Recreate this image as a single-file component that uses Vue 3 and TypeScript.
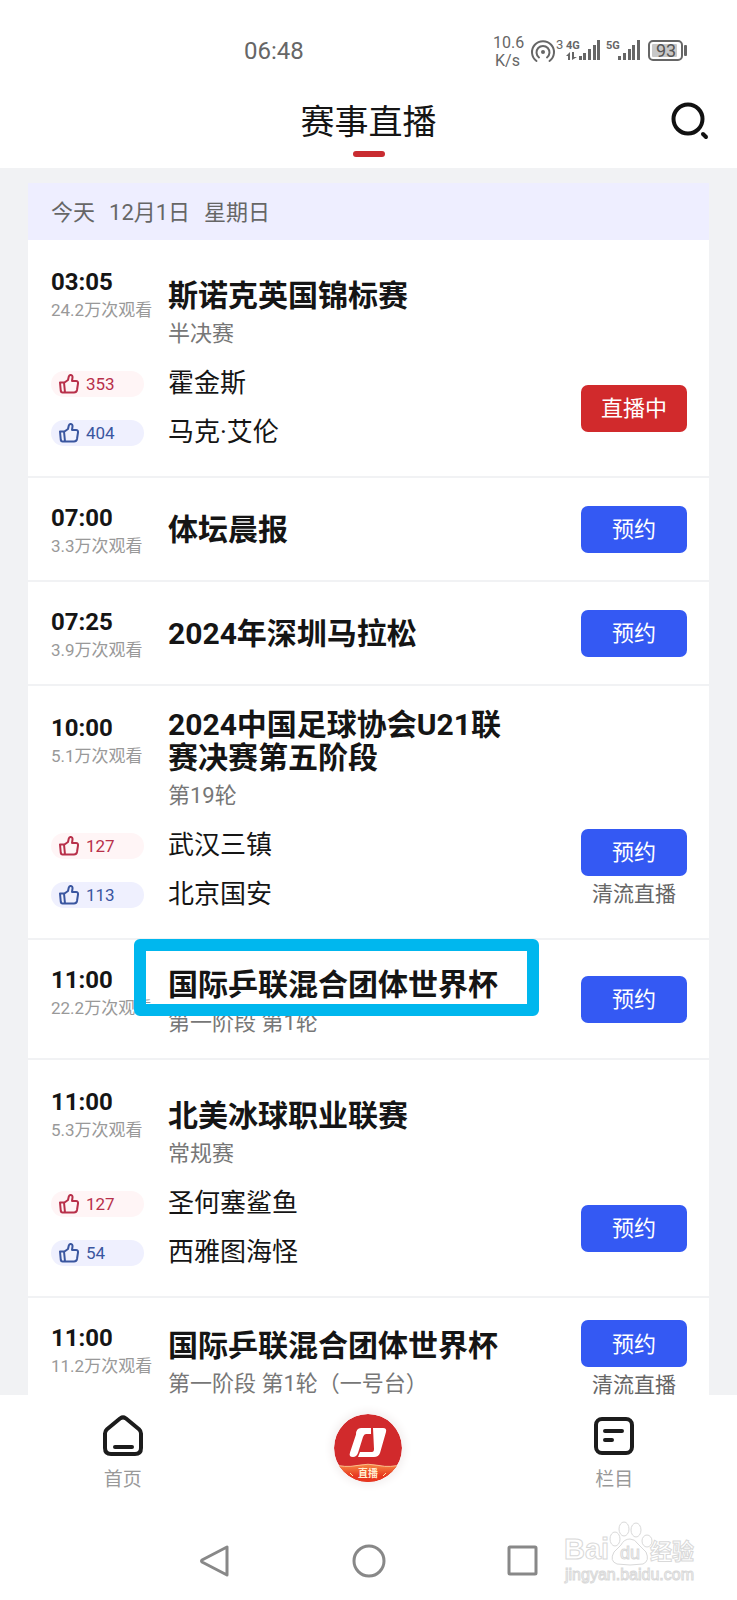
<script setup lang="ts">
interface Side {
  name: string
  votes: number
}

interface LiveEvent {
  id: number
  time: string
  views: string
  title: string
  round?: string
  sides?: Side[]
  live?: boolean
  clean?: boolean
  long?: boolean
  marked?: boolean
}

const events: LiveEvent[] = [
  {
    id: 1,
    time: '03:05',
    views: '24.2万次观看',
    title: '斯诺克英国锦标赛',
    round: '半决赛',
    live: true,
    sides: [
      { name: '霍金斯', votes: 353 },
      { name: '马克·艾伦', votes: 404 },
    ],
  },
  { id: 2, time: '07:00', views: '3.3万次观看', title: '体坛晨报' },
  { id: 3, time: '07:25', views: '3.9万次观看', title: '2024年深圳马拉松' },
  {
    id: 4,
    time: '10:00',
    views: '5.1万次观看',
    title: '2024中国足球协会U21联赛决赛第五阶段',
    round: '第19轮',
    clean: true,
    long: true,
    sides: [
      { name: '武汉三镇', votes: 127 },
      { name: '北京国安', votes: 113 },
    ],
  },
  {
    id: 5,
    time: '11:00',
    views: '22.2万次观看',
    title: '国际乒联混合团体世界杯',
    round: '第一阶段 第1轮',
    marked: true,
  },
  {
    id: 6,
    time: '11:00',
    views: '5.3万次观看',
    title: '北美冰球职业联赛',
    round: '常规赛',
    sides: [
      { name: '圣何塞鲨鱼', votes: 127 },
      { name: '西雅图海怪', votes: 54 },
    ],
  },
  {
    id: 7,
    time: '11:00',
    views: '11.2万次观看',
    title: '国际乒联混合团体世界杯',
    round: '第一阶段 第1轮（一号台）',
    clean: true,
  },
]

function kind(e: LiveEvent): string[] {
  const names: string[] = []
  if (e.sides) names.push('match')
  else if (e.round) names.push('stage')
  if (e.long) names.push('long')
  if (e.clean) names.push('clean')
  return names
}
</script>

<template>
  <div class="screen">
    <div class="status">
      <span class="clock">06:48</span>
      <svg class="signals" viewBox="0 0 204 44" aria-hidden="true">
        <g fill="#666">
          <text x="5" y="19" font-size="16">10.6</text>
          <text x="7" y="37" font-size="16">K/s</text>
          <text x="68" y="20" font-size="13">3</text>
          <text x="78" y="20" font-size="11" font-weight="700">4G</text>
          <text x="118" y="20" font-size="11" font-weight="700">5G</text>
          <circle cx="55" cy="23" r="2" />
          <path d="M78 27l4-4v8h-2v-4zM84 23v8l5-3h-3v-5z" />
          <path d="M91 27h3v4h-3zM95 24h3v7h-3zM100 20h3v11h-3zM105 16h3v15h-3zM109 11h3v20h-3z" />
          <path d="M130 27h3v4h-3zM135 24h3v7h-3zM140 20h3v11h-3zM144 16h3v15h-3zM149 11h3v20h-3z" />
          <rect x="196" y="16" width="3" height="11" rx="1" />
        </g>
        <g fill="none" stroke="#666" stroke-width="2" stroke-linecap="round">
          <path d="M48.500 32a11 11 0 1 1 13 0" />
          <path d="M51 28.500a6.500 6.500 0 1 1 8 0" />
          <rect x="161" y="12" width="33" height="19" rx="4" />
        </g>
        <rect x="164" y="15" width="25" height="13" rx="1" fill="#c8c8c8" />
        <text x="168" y="28" font-size="18" fill="#555">93</text>
      </svg>
    </div>

    <header class="bar">
      <h1>赛事直播</h1>
      <button class="search" type="button" aria-label="搜索">
        <svg viewBox="0 0 40 40">
          <circle cx="18" cy="18" r="14.500" />
          <path d="M33 33l3 3" />
        </svg>
      </button>
    </header>

    <main class="feed">
      <section class="card">
        <h2><span>今天</span><span>12月1日</span><span>星期日</span></h2>
        <ul class="events">
          <li v-for="e in events" :key="e.id" class="event" :class="kind(e)">
            <div class="when">
              <time>{{ e.time }}</time>
              <span>{{ e.views }}</span>
            </div>
            <div class="what">
              <h3>{{ e.title }}</h3>
              <p v-if="e.round">{{ e.round }}</p>
            </div>
            <div v-if="e.sides" class="sides">
              <div v-for="(s, i) in e.sides" :key="s.name" class="side">
                <button class="vote" :class="{ away: i === 1 }" type="button">
                  <svg viewBox="0 0 20 20" aria-hidden="true">
                    <path d="M1 8.500h4l1 10H3.500Q2 18.500 1.800 17zM5.500 8.500L9 6l.8-3.500Q10.300.8 12 1q1.800.4 1.500 2.500L13 7h4q2.300 0 2 2.500l-1 6.500q-.5 2.500-3 2.500H6" />
                  </svg>
                  {{ s.votes }}
                </button>
                <span>{{ s.name }}</span>
              </div>
            </div>
            <div class="action">
              <button type="button" :class="{ live: e.live }">{{ e.live ? '直播中' : '预约' }}</button>
              <span v-if="e.clean">清流直播</span>
            </div>
            <div v-if="e.marked" class="mark"></div>
          </li>
        </ul>
      </section>
    </main>

    <nav class="tabs">
      <a href="#home">
        <svg class="tab-icon" viewBox="0 0 44 44" aria-hidden="true">
          <path d="M4 19.500Q4 17 6 15.200L19.300 4.300Q22 2.500 24.700 4.300L38 15.200Q40 17 40 19.500V34q0 6-6 6H10q-6 0-6-6z" />
          <path d="M14 33h17" />
        </svg>
        首页
      </a>
      <a href="#live" class="logo" aria-label="直播">
        <svg viewBox="0 0 68 68">
          <defs>
            <clipPath id="disc"><circle cx="34" cy="34" r="34" /></clipPath>
            <linearGradient id="ribbon" x1="0" y1="0" x2="0" y2="1">
              <stop offset="0" stop-color="#f68a45" />
              <stop offset="0.600" stop-color="#e8371f" />
            </linearGradient>
          </defs>
          <g clip-path="url(#disc)">
            <path fill="#d12a2c" d="M0 0h68v68H0z" />
            <path fill="url(#ribbon)" stroke="#fbc28d" d="M-2 50q13 4 25 1.500 11-2.500 22 0t25-1.500v20H-2z" />
          </g>
          <path fill="#fff" d="M27 14h10v6h-5q-2 0-3 3l-5 16q-1.500 4-5 4-4.500 0-3-4.500l6-18Q22 14 27 14zM39 14h10q4 0 3 4l-6 21q-1.500 4-6 4H24l2-5h12q2 0 2-3z" />
          <path fill="none" stroke="#ffe3a8" d="M16 59l3 3M52 59l-3 3" />
          <text x="34" y="63" text-anchor="middle" font-size="10" font-weight="700" fill="#fff1d2">直播</text>
        </svg>
      </a>
      <a href="#columns">
        <svg class="tab-icon" viewBox="0 0 44 44" aria-hidden="true">
          <rect x="4" y="5" width="36" height="34" rx="6" />
          <path d="M13 17h17M13 26h7" />
        </svg>
        栏目
      </a>
    </nav>

    <footer class="system">
      <button type="button" aria-label="返回">
        <svg viewBox="0 0 34 34"><path d="M29 3v28L4 18Q3 17 4 16z" /></svg>
      </button>
      <button type="button" aria-label="主屏幕">
        <svg viewBox="0 0 34 34"><circle cx="17" cy="17" r="15" /></svg>
      </button>
      <button type="button" aria-label="最近任务">
        <svg viewBox="0 0 34 34"><rect x="3" y="3" width="27" height="27" rx="1" /></svg>
      </button>
      <svg class="credit" viewBox="0 0 140 68" aria-hidden="true">
        <g fill="#fff" stroke="#d9d9d9">
          <ellipse cx="54" cy="22" rx="5" ry="7" />
          <ellipse cx="63" cy="12" rx="5" ry="7" />
          <ellipse cx="75" cy="13" rx="5" ry="7" />
          <ellipse cx="86" cy="24" rx="5" ry="6" />
          <path d="M69 22q-6 0-9 6l-7 7q-5 9 3 12 13 2 26 0 7-3 3-12l-8-8q-3-5-8-5z" />
          <text x="3" y="42" font-size="29" font-weight="700">Bai</text>
          <text x="59" y="42" font-size="18">du</text>
          <text x="89" y="42" font-size="22" font-weight="700">经验</text>
          <text x="4" y="63" font-size="16">jingyan.baidu.com</text>
        </g>
      </svg>
    </footer>
  </div>
</template>

<style>
body {
  margin: 0;
}
</style>

<style scoped>
.screen {
  display: flex;
  flex-direction: column;
  height: 100vh;
  background: #fff;
  color: #151515;
  font-family: Roboto, "Noto Sans CJK SC", sans-serif;
}
h1, h2, h3, p, ul {
  margin: 0;
  padding: 0;
  font-weight: 400;
}
button {
  padding: 0;
  border: 0;
  background: none;
  font: inherit;
  cursor: pointer;
}
svg {
  display: block;
  flex: none;
}
.status {
  display: flex;
  justify-content: space-between;
  align-items: center;
  height: 74px;
  padding: 28px 45px 0 244px;
  box-sizing: border-box;
  color: #666;
  font-size: 24px;
}
.signals {
  width: 204px;
  height: 44px;
}
.bar {
  display: grid;
  grid-template-columns: 1fr auto 1fr;
  align-items: center;
  height: 94px;
  padding: 0 27px;
}
.bar h1 {
  grid-column: 2;
  display: flex;
  flex-direction: column;
  align-items: center;
  gap: 4px;
  padding-top: 12px;
  font-size: 34px;
  line-height: 50px;
}
.bar h1::after {
  content: "";
  width: 32px;
  height: 6px;
  border-radius: 3px;
  background: #c92c31;
}
.search {
  justify-self: end;
}
.search svg {
  width: 40px;
  height: 40px;
  fill: none;
  stroke: #111;
  stroke-width: 4;
  stroke-linecap: round;
}
.feed {
  flex: 1;
  min-height: 0;
  overflow: hidden;
  padding: 15px 28px 0;
  background: #f1f2f4;
}
.card {
  background: #fff;
}
.card h2 {
  display: flex;
  gap: 14px;
  padding: 2px 23px 0;
  background: #eeeeff;
  color: #666;
  font-size: 22px;
  line-height: 55px;
}
.events {
  list-style: none;
}
.event {
  position: relative;
  display: grid;
  grid-template: "when what action" auto / 117px 1fr 106px;
  padding: 0 22px 0 23px;
  border-bottom: 2px solid #f1f2f4;
}
.match {
  grid-template:
    "when what ." auto
    "sides sides action" auto / 117px 1fr 106px;
  row-gap: 4px;
  padding-bottom: 19px;
}
.when {
  grid-area: when;
  display: flex;
  flex-direction: column;
  padding: 26px 0 20px;
  line-height: 28px;
  white-space: nowrap;
}
.match .when {
  padding: 28px 0 0;
}
.when time {
  font-size: 24px;
  font-weight: 700;
}
.when span {
  color: #999;
  font-size: 17px;
}
.what {
  grid-area: what;
  padding: 35px 60px 0 0;
}
.stage .what {
  padding: 28px 0 14px;
}
.match .what {
  padding-top: 39px;
}
.long .what {
  padding-top: 22px;
}
.what h3 {
  font-size: 30px;
  font-weight: 700;
  line-height: 33px;
}
.what p {
  color: #777;
  font-size: 22px;
  line-height: 43px;
}
.sides {
  grid-area: sides;
}
.side {
  display: grid;
  grid-template-columns: 93px 1fr;
  align-items: center;
  column-gap: 24px;
  font-size: 26px;
  line-height: 49px;
}
.vote {
  display: flex;
  align-items: center;
  gap: 7px;
  height: 26px;
  padding: 0 8px;
  border-radius: 13px;
  background: #fff5f6;
  color: #b8304a;
  font-size: 17px;
  line-height: 26px;
}
.vote.away {
  background: #eff0fe;
  color: #3a56a0;
}
.vote svg {
  width: 20px;
  height: 20px;
  fill: none;
  stroke: currentColor;
  stroke-width: 2;
  stroke-linejoin: round;
}
.action {
  grid-area: action;
  align-self: center;
  display: flex;
  flex-direction: column;
  color: #666;
  font-size: 21px;
  line-height: 36px;
  text-align: center;
}
.clean:not(.match) .action {
  padding: 22px 0;
}
.clean:not(.match) .what {
  padding-top: 31px;
}
.action button {
  height: 47px;
  padding-top: 2px;
  border-radius: 7px;
  background: #3459f3;
  color: #fff;
  font-size: 22px;
}
.action button.live {
  background: #d12a2c;
}
.mark {
  position: absolute;
  top: -1px;
  left: 106px;
  width: 405px;
  height: 77px;
  box-sizing: border-box;
  border: 12px solid #00b7ee;
  border-radius: 6px;
}
.tabs {
  display: grid;
  grid-template-columns: repeat(3, 1fr);
  justify-items: center;
  align-items: start;
  padding-top: 19px;
}
.tabs a {
  display: flex;
  flex-direction: column;
  align-items: center;
  gap: 6px;
  color: #999;
  font-size: 19px;
  line-height: 32px;
  text-decoration: none;
}
.tab-icon {
  width: 44px;
  height: 44px;
  fill: none;
  stroke: #1c1c1c;
  stroke-width: 4;
  stroke-linecap: round;
  stroke-linejoin: round;
}
.logo svg {
  width: 68px;
  height: 68px;
  border-radius: 50%;
  box-shadow: 0 0 8px 3px #f3efef;
}
.system {
  position: relative;
  display: flex;
  justify-content: center;
  gap: 120px;
  padding: 48px 0 22px;
}
.system button svg {
  width: 34px;
  height: 34px;
  fill: none;
  stroke: #888;
  stroke-width: 3;
  stroke-linejoin: round;
}
.credit {
  position: absolute;
  right: 36px;
  bottom: 15px;
  width: 140px;
  height: 68px;
  font-family: "Liberation Sans", "Noto Sans CJK SC", sans-serif;
}
</style>
